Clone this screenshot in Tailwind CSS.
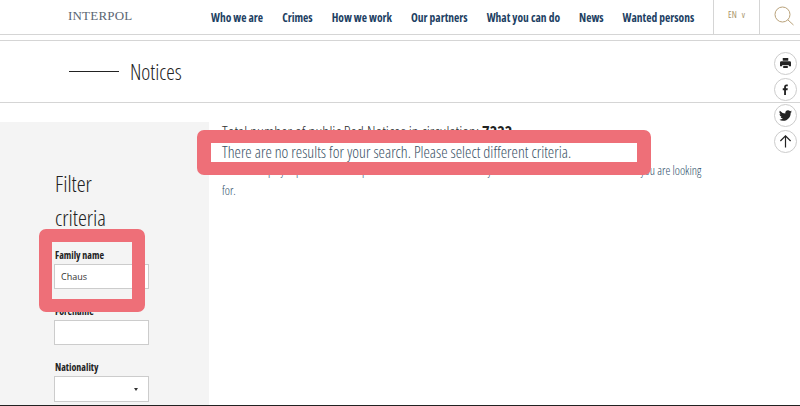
<!DOCTYPE html>
<html lang="en">
<head>
  <meta charset="UTF-8">
  <meta name="viewport" content="width=device-width, initial-scale=1.0">
  <title>Notices - INTERPOL</title>
  <script src="https://cdn.jsdelivr.net/npm/@tailwindcss/browser@4"></script>
</head>
<body class="relative w-[800px] h-[406px] overflow-hidden bg-white font-['Open_Sans',sans-serif] [font-stretch:75%]">
  <!-- top nav -->
  <header class="h-[35px] flex border-b border-[#d5d5d5]">
    <div class="w-[68px]"></div>
    <div class="w-[143px] pt-[8px] font-['Liberation_Serif',serif] text-[13px] leading-[16px] text-[#5a6672] tracking-[0.2px]">INTERPOL</div>
    <nav class="flex gap-[19px] pt-[10px] text-[#1d3f63] text-[11.500px] leading-[16px] font-bold w-[502px]">
      <a>Who we are</a>
      <a>Crimes</a>
      <a>How we work</a>
      <a>Our partners</a>
      <a>What you can do</a>
      <a>News</a>
      <a>Wanted persons</a>
    </nav>
    <div class="w-[47px] border-x border-[#d5d5d5] flex justify-center pt-[8px] gap-[5px] text-[#a89468] text-[9px] leading-[14px]"><span>EN</span><span>v</span></div>
    <div class="flex-1 pl-[14px] pt-[6px]">
      <svg class="w-[20px] h-[20px]" viewBox="0 0 20 20" fill="none" stroke="#b9a27a" stroke-width="1"><circle cx="8.500" cy="8.500" r="7.500"/><path d="M13.800 13.800l5.700 5.200"/></svg>
    </div>
  </header>

  <!-- page title -->
  <div class="mt-[5px] h-[63px] border-y border-[#d5d5d5] flex items-center pl-[69px] gap-[11px]">
    <span class="w-[50px] h-px bg-[#222]"></span>
    <h1 class="pt-[2px] text-[21.500px] font-light text-[#222]">Notices</h1>
  </div>

  <!-- share buttons -->
  <div class="absolute left-[774px] top-[52px] flex flex-col gap-[3px]">
    <span class="w-[23px] h-[23px] rounded-full border border-[#ccc] bg-white flex items-center justify-center">
      <svg class="w-[11px] h-[11px]" viewBox="0 0 12 12" fill="#222"><path d="M3 0h6v3H3zM1.500 3.500h9A1.500 1.500 0 0 1 12 5v4H9.500V7.500h-7V9H0V5a1.500 1.500 0 0 1 1.500-1.500zM3.500 8.500h5V11h-5z"/></svg>
    </span>
    <span class="w-[23px] h-[23px] rounded-full border border-[#ccc] bg-white flex items-center justify-center">
      <svg class="w-[11px] h-[11px]" viewBox="0 0 12 12" fill="#222"><path d="M4.500 12V6.700H3V4.700h1.500V3.300C4.500 1.500 5.500.5 7 .5c.7 0 1.300.1 1.500.1v1.800h-1c-.8 0-1 .4-1 1v1.300h2l-.3 2H6.500V12z"/></svg>
    </span>
    <span class="w-[23px] h-[23px] rounded-full border border-[#ccc] bg-white flex items-center justify-center">
      <svg class="w-[13px] h-[13px]" viewBox="0 0 24 24" fill="#222"><path d="M23.950 4.570a10 10 0 0 1-2.830.78 4.960 4.960 0 0 0 2.170-2.720 9.900 9.900 0 0 1-3.130 1.190 4.930 4.930 0 0 0-8.400 4.490A14 14 0 0 1 1.640 3.160a4.930 4.930 0 0 0 1.530 6.570 4.900 4.900 0 0 1-2.230-.61v.06a4.930 4.930 0 0 0 3.950 4.830 5 5 0 0 1-2.210.08 4.940 4.940 0 0 0 4.600 3.420A9.900 9.900 0 0 1 0 19.540a14 14 0 0 0 7.560 2.210c9.050 0 14-7.500 14-13.980 0-.21 0-.42-.02-.63a10 10 0 0 0 2.410-2.570z"/></svg>
    </span>
    <span class="w-[23px] h-[23px] rounded-full border border-[#ccc] bg-white flex items-center justify-center">
      <svg class="w-[13px] h-[13px]" viewBox="0 0 14 14" fill="none" stroke="#222" stroke-width="1.300"><path d="M7 13.500V1M1.500 6.500L7 1l5.500 5.500"/></svg>
    </span>
  </div>

  <div class="flex mt-[19px] border-b border-[#222] h-[284px]">
    <!-- filter sidebar -->
    <aside class="w-[209px] bg-[#f4f4f4] pl-[54px] pt-[45px]">
      <h2 class="pl-px text-[22.500px] leading-[34px] font-light text-[#222]">Filter<br>criteria</h2>
      <label class="block pl-px mt-[13px] text-[10px] leading-[14px] font-bold text-[#222]">Family name</label>
      <div class="mt-[2px] w-[95px] h-[25px] bg-white border border-[#ccc] pl-[6px] text-[9px] leading-[23px] text-[#333] [font-stretch:100%]">Chaus</div>
      <label class="block pl-px mt-[15px] text-[10px] leading-[14px] font-bold text-[#222]">Forename</label>
      <div class="mt-[2px] w-[95px] h-[25px] bg-white border border-[#ccc]"></div>
      <label class="block pl-px mt-[15px] text-[10px] leading-[14px] font-bold text-[#222]">Nationality</label>
      <div class="mt-[2px] w-[95px] h-[26px] bg-white border border-[#ccc] relative">
        <span class="absolute left-[79px] top-[11px] border-x-[2.500px] border-t-[3px] border-x-transparent border-t-[#333]"></span>
      </div>
    </aside>
    <!-- results -->
    <main class="pl-[13px] flex-1 text-[#2c4c68] font-light">
      <p class="text-[16.100px] leading-[20px] text-[#333]">Total number of public Red Notices in circulation: <b class="font-bold text-[#222]">7222</b></p>
      <p class="text-[16.100px] leading-[20px] text-[#3a5266]">There are no results for your search. Please select different criteria.</p>
      <p class="-mt-[1px] w-[484px] text-[12.300px] leading-[20px]">This site displays up to 160 notices per search result. Please refine your search criteria to find the notices you are looking for.</p>
    </main>
  </div>

  <!-- red highlights over the screenshot -->
  <div class="absolute left-[197px] top-[130px] w-[454px] h-[45px] border-y-[13px] border-l-[14px] border-r-[14px] border-[#ee6f78] rounded-[7px]"></div>
  <div class="absolute left-[39px] top-[229px] w-[106px] h-[83px] border-[13px] border-[#ee6f78] rounded-[7px]"></div>
</body>
</html>
